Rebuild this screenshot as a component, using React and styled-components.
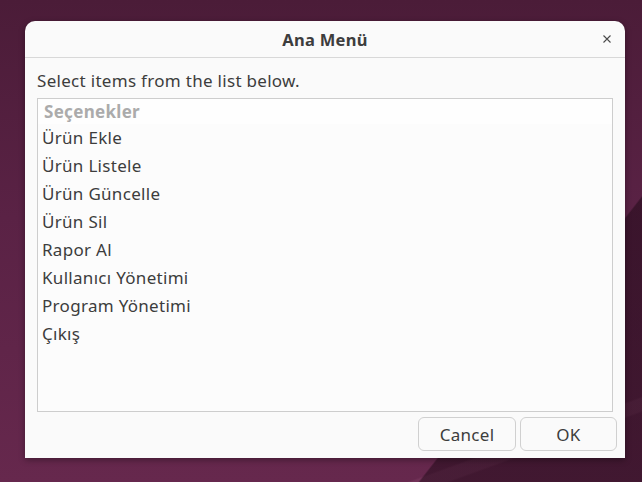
import React from "react";
import styled, { createGlobalStyle } from "styled-components";

const Global = createGlobalStyle`
  html, body {
    margin: 0;
    padding: 0;
  }
  body {
    width: 642px;
    height: 482px;
    overflow: hidden;
    font-family: "Noto Sans", "DejaVu Sans", sans-serif;
    background:
      linear-gradient(128deg, transparent 0 78%, rgba(20, 4, 14, 0.45) 78.2% 100%),
      linear-gradient(160deg, transparent 0 88%, rgba(150, 80, 120, 0.25) 88.3% 90%, transparent 90.3%),
      linear-gradient(180deg, #4b1c38 0%, #5a2245 45%, #66284d 100%);
  }
`;

const Desktop = styled.div`
  width: 642px;
  height: 482px;
  padding: 21px 0 0 25px;
  box-sizing: border-box;
`;

const Dialog = styled.div`
  width: 600px;
  height: 437px;
  background: #fafafa;
  border-radius: 10px 10px 0 0;
  box-shadow: 0 2px 6px rgba(0, 0, 0, 0.35);
  display: flex;
  flex-direction: column;
  box-sizing: border-box;
`;

const TitleBar = styled.div`
  height: 37px;
  border-bottom: 1px solid #d8d8d8;
  display: flex;
  align-items: center;
  justify-content: center;
  position: relative;
  box-sizing: border-box;
`;

const Title = styled.h1`
  margin: 0;
  font-size: 16.5px;
  letter-spacing: 0.3px;
  font-weight: 700;
  color: #3d3d3d;
`;

const Close = styled.button`
  position: absolute;
  right: 12px;
  top: 12px;
  width: 12px;
  height: 12px;
  padding: 0;
  border: 0;
  background: none;
  display: flex;
  align-items: center;
  justify-content: center;
`;

const Body = styled.div`
  flex: 1;
  display: flex;
  flex-direction: column;
  padding: 13px 12px 0 12px;
`;

const Prompt = styled.div`
  font-size: 17px;
  letter-spacing: 0.3px;
  line-height: 20px;
  color: #3d3d3d;
  margin-bottom: 7px;
`;

const ListBox = styled.div`
  height: 314px;
  border: 1px solid #cdcdcd;
  background: #fcfcfc;
  box-sizing: border-box;
`;

const ColumnHead = styled.div`
  height: 25px;
  line-height: 25px;
  padding-left: 6px;
  font-size: 17px;
  letter-spacing: 0.3px;
  font-weight: 700;
  color: #ababab;
  background: #fefefe;
`;

const Row = styled.div`
  height: 28px;
  line-height: 28px;
  padding-left: 4px;
  font-size: 17px;
  letter-spacing: 0.3px;
  color: #3d3d3d;
`;

const Footer = styled.div`
  display: flex;
  justify-content: flex-end;
  gap: 4px;
  padding: 5px 8px 7px 0;
`;

const Button = styled.button`
  width: ${(p) => p.w}px;
  height: 34px;
  border: 1px solid #d0d0d0;
  border-radius: 6px;
  background: #fafafa;
  font-family: inherit;
  font-size: 17px;
  letter-spacing: 0.3px;
  color: #3d3d3d;
  padding: 0;
`;

const items = [
  "Ürün Ekle",
  "Ürün Listele",
  "Ürün Güncelle",
  "Ürün Sil",
  "Rapor Al",
  "Kullanıcı Yönetimi",
  "Program Yönetimi",
  "Çıkış",
];

export default function App() {
  return (
    <Desktop>
      <Global />
      <Dialog>
        <TitleBar>
          <Title>Ana Menü</Title>
          <Close aria-label="Kapat">
            <svg width="10" height="10" viewBox="0 0 10 10">
              <path d="M1.5 1.5 L8.5 8.5 M8.5 1.5 L1.5 8.5" stroke="#4a4a4a" strokeWidth="1.1" />
            </svg>
          </Close>
        </TitleBar>
        <Body>
          <Prompt>Select items from the list below.</Prompt>
          <ListBox>
            <ColumnHead>Seçenekler</ColumnHead>
            {items.map((it) => (
              <Row key={it}>{it}</Row>
            ))}
          </ListBox>
        </Body>
        <Footer>
          <Button w={98}>Cancel</Button>
          <Button w={97}>OK</Button>
        </Footer>
      </Dialog>
    </Desktop>
  );
}
